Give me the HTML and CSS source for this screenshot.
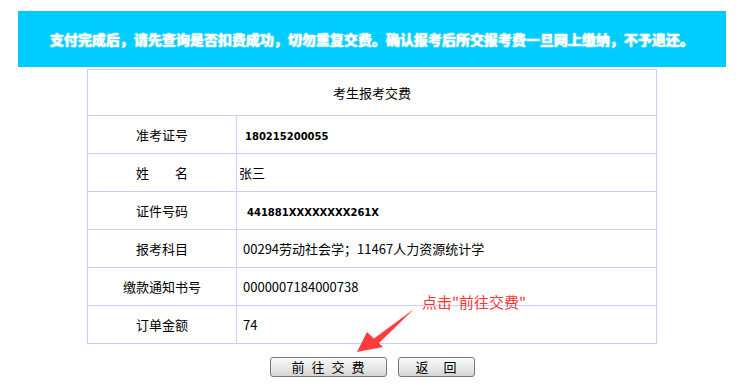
FILE: index.html
```html
<!doctype html>
<html>
	<head>
		<meta charset="utf-8">
		<link rel="stylesheet" href="styles.css">
	</head>
	<body>
		<div id="page">
			<div id="notice">支付完成后，请先查询是否扣费成功，切勿重复交费。确认报考后所交报考费一旦网上缴纳，不予退还。</div>

			<table id="info">
				<tr><th colspan="2">考生报考交费</th></tr>
				<tr><td class="label">准考证号</td><td class="value"><b class="num">180215200055</b></td></tr>
				<tr><td class="label">姓　　名</td><td class="value tight">张三</td></tr>
				<tr><td class="label">证件号码</td><td class="value"><b class="num wide">441881XXXXXXXX261X</b></td></tr>
				<tr><td class="label">报考科目</td><td class="value">00294劳动社会学；11467人力资源统计学</td></tr>
				<tr><td class="label">缴款通知书号</td><td class="value">0000007184000738</td></tr>
				<tr><td class="label">订单金额</td><td class="value">74</td></tr>
			</table>

			<div id="actions">
				<button class="btn pay">前往交费</button>
				<button class="btn back">返回</button>

				<!-- hint drawn over the page -->
				<div id="hint">
					<span>点击"前往交费"</span>
					<svg width="60" height="46" viewBox="0 0 60 46">
						<path d="M58 1 L16 32 L21 37 Z" fill="#ff3b3b"/>
						<path d="M1 44 L27 39 L11 24 Z" fill="#ff3b3b"/>
					</svg>
				</div>
			</div>
		</div>
	</body>
</html>
```

FILE: styles.css
```css
body, html {
	margin: 0;
	padding: 0;
	background: white;
	font-family: "Noto Sans CJK SC", sans-serif;
	font-size: 13px;
	color: black;
}

#page {
	padding: 11px 19px 0 18px;
}

#notice {
	height: 56px;
	background: #00ccff;
	color: white;
	font-weight: bold;
	font-size: 14px;
	display: flex;
	align-items: center;
	justify-content: center;
	text-shadow: 0 0 2px white, 0 0 1px white;
}

#info {
	width: 570px;
	margin: 2px auto 0;
	border-collapse: collapse;
	border: 1px solid #ccccff;
}

#info th {
	height: 43px;
	font-weight: normal;
	border: 1px solid #ccccff;
}

#info td {
	height: 37px;
	border: 1px solid #ccccff;
	padding: 0;
}

#info td.label {
	width: 148px;
	text-align: center;
}

#info td.value {
	padding-left: 6px;
}

#info td.tight {
	padding-left: 2px;
}

.num {
	font-family: "DejaVu Sans", sans-serif;
	font-size: 10px;
	padding-left: 2px;
}

.num.wide {
	padding-left: 4px;
}

#actions {
	position: relative;
	display: flex;
	justify-content: center;
	gap: 11px;
	padding: 13px 0 0 0;
}

.btn {
	height: 20px;
	padding: 0;
	border: 1px solid #777;
	border-radius: 3px;
	background: linear-gradient(#fafafa, #e6e6e6 60%, #d4d4d4);
	font-family: "Noto Sans CJK SC", sans-serif;
	font-size: 13px;
	line-height: 16px;
	color: black;
}

.btn.pay {
	width: 117px;
	letter-spacing: 7px;
	text-indent: 7px;
}

.btn.back {
	width: 77px;
	letter-spacing: 15px;
	text-indent: 15px;
}

#hint {
	position: absolute;
	left: 338px;
	top: -50px;
	width: 200px;
	height: 60px;
}

#hint span {
	position: absolute;
	left: 66px;
	top: -3px;
	color: #ff3333;
	font-size: 15px;
	white-space: nowrap;
}

#hint svg {
	position: absolute;
	left: 0;
	top: 14px;
}
```
